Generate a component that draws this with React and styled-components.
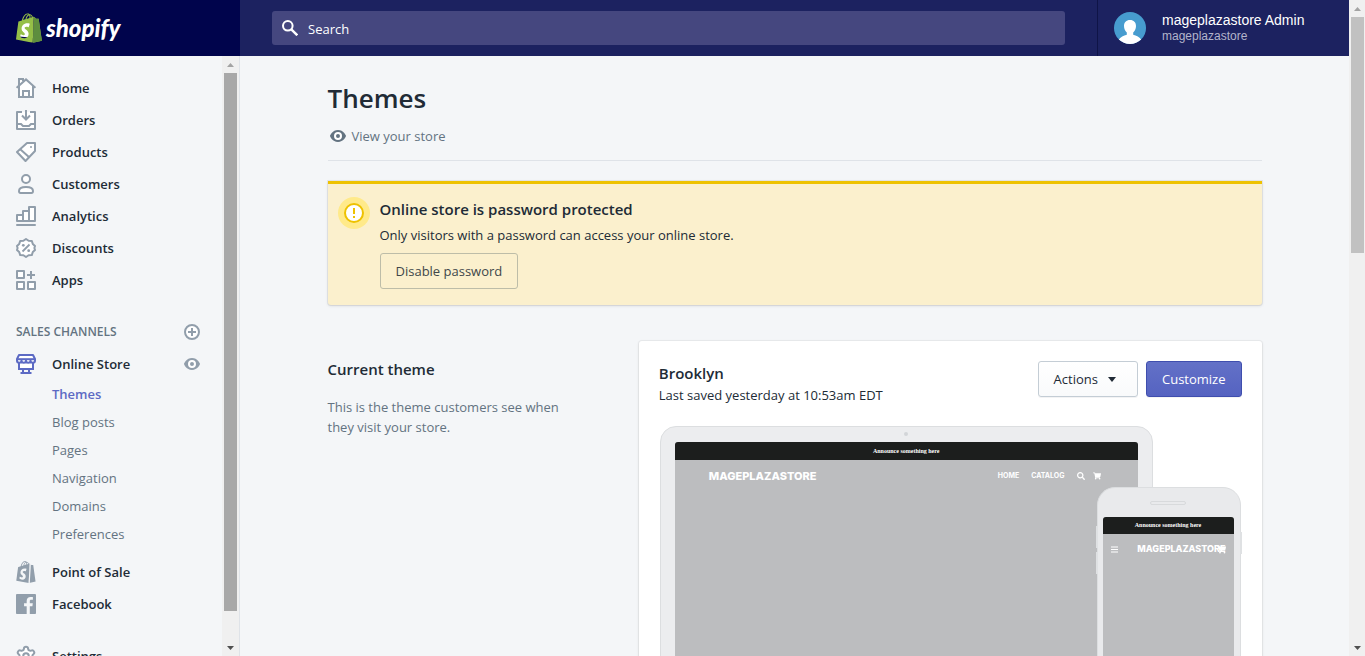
import React from 'react';
import styled, { createGlobalStyle } from 'styled-components';
import { SiShopify } from 'react-icons/si';
import { FaShoppingCart, FaSearch } from 'react-icons/fa';
import { Settings } from 'lucide-react';

const GlobalStyle = createGlobalStyle`
  *, *::before, *::after { box-sizing: border-box; }
  body {
    margin: 0;
    background: #f4f6f8;
    color: #212b36;
    font-family: "Open Sans", "Noto Sans", sans-serif;
    font-size: 13px;
    line-height: 20px;
  }
  h1, h2, h3, p, ul { margin: 0; padding: 0; }
  ul { list-style: none; }
  a { color: inherit; text-decoration: none; }
  button, input { font: inherit; }
  svg { display: block; flex: none; }
`;

const Frame = styled.div`
  display: flex;
  height: 100vh;
  overflow: hidden;
`;
const Page = styled.div`
  flex: 1;
  min-width: 0;
  display: flex;
  flex-direction: column;
`;

/* Scroll bars */
const Track = styled.div`
  flex: none;
  width: ${(p) => p.$width}px;
  padding: 0 2px;
  display: flex;
  flex-direction: column;
  align-items: center;
  background: #f0f0f0;
`;
const Arrow = styled.span`
  flex: none;
  height: 17px;
  display: flex;
  align-items: center;
  justify-content: center;
`;
const Thumb = styled.div`
  width: 13px;
  height: ${(p) => p.$size};
  background: ${(p) => p.$color};
`;
const Fill = styled.div`
  flex: 1;
  min-height: 0;
`;

function ScrollBar({ width, size, color }) {
  return (
    <Track $width={width} aria-hidden="true">
      <Arrow><svg width="7" height="4"><path d="M0 4L3.5 0 7 4z" fill="#a3a3a3" /></svg></Arrow>
      <Fill><Thumb $size={size} $color={color} /></Fill>
      <Arrow><svg width="7" height="4"><path d="M0 0L3.5 4 7 0z" fill="#505050" /></svg></Arrow>
    </Track>
  );
}

/* Top bar */
const TopBar = styled.header`
  flex: none;
  display: flex;
  height: 56px;
  background: #1c2260;
  color: #fff;
`;
const Brand = styled.a`
  flex: none;
  width: 240px;
  padding: 0 16px;
  display: flex;
  align-items: center;
  gap: 4px;
  background: #00044c;
`;
const Wordmark = styled.span`
  font-family: Lato, "Open Sans", sans-serif;
  font-size: 24px;
  line-height: 28px;
  font-weight: 900;
  font-style: italic;
`;
const SearchArea = styled.div`
  flex: 1;
  padding: 0 32px;
  display: flex;
  align-items: center;
`;
const SearchField = styled.label`
  flex: 1;
  height: 34px;
  padding: 0 10px;
  display: flex;
  align-items: center;
  gap: 10px;
  border-radius: 3px;
  background: #45477f;
`;
const SearchInput = styled.input`
  flex: 1;
  min-width: 0;
  padding: 2px 0 0;
  border: 0;
  outline: 0;
  background: none;
  color: #fff;
  &::placeholder { color: #fff; opacity: 1; }
`;
const User = styled.button`
  flex: none;
  width: 252px;
  padding: 0 16px;
  border: 0;
  border-left: 1px solid #0f1447;
  background: none;
  color: #fff;
  display: flex;
  align-items: center;
  gap: 16px;
  text-align: left;
  font-family: "Liberation Sans", Arial, sans-serif;
`;
const UserName = styled.span`
  display: block;
  font-size: 14px;
  line-height: 16px;
`;
const StoreName = styled(UserName)`
  font-size: 12px;
  color: #b3b5cb;
`;

/* Side navigation */
const Body = styled.div`
  flex: 1;
  min-height: 0;
  display: flex;
`;
const Side = styled.aside`
  flex: none;
  width: 240px;
  display: flex;
  overflow: hidden;
  border-right: 1px solid #dfe3e8;
`;
const Nav = styled.nav`
  flex: 1;
  padding: 16px 22px 0 16px;
`;
const Group = styled.ul`
  margin-bottom: ${(p) => p.$gap || 0}px;
`;
const NavRow = styled.li`
  height: 32px;
  display: flex;
  align-items: center;
  color: #919eab;
`;
const NavLink = styled.a`
  flex: 1;
  display: flex;
  align-items: center;
  gap: 16px;
  color: #212b36;
  font-weight: 600;
  svg { color: ${(p) => (p.$active ? '#5c6ac4' : '#919eab')}; }
`;
const SectionHead = styled.div`
  height: 32px;
  display: flex;
  align-items: center;
  justify-content: space-between;
`;
const SectionTitle = styled.h2`
  font-size: 12px;
  line-height: 16px;
  font-weight: 600;
  color: #637381;
`;
const IconButton = styled.button`
  width: 16px;
  padding: 0;
  border: 0;
  background: none;
  color: #919eab;
  display: flex;
  justify-content: center;
`;
const SubLink = styled.a`
  display: block;
  padding: 4px 0 4px 36px;
  color: ${(p) => (p.$active ? '#5c6ac4' : '#637381')};
  font-weight: ${(p) => (p.$active ? 600 : 400)};
`;

/* Main content */
const Main = styled.main`
  flex: 1;
  min-width: 0;
  overflow: hidden;
`;
const Content = styled.div`
  max-width: 998px;
  margin: 0 auto;
  padding: 24px 32px 0;
`;
const PageHead = styled.div`
  padding-bottom: 14px;
  border-bottom: 1px solid #dfe3e8;
`;
const Title = styled.h1`
  font-size: 26px;
  line-height: 36px;
  font-weight: 600;
`;
const ViewLink = styled.a`
  margin-top: 10px;
  display: flex;
  align-items: center;
  gap: 4px;
  color: #637381;
`;
const Banner = styled.section`
  margin-top: 20px;
  padding: 13px 16px 16px 10px;
  display: flex;
  gap: 10px;
  border-top: 3px solid #eec200;
  border-radius: 0 0 3px 3px;
  background: #fbf0cd;
  box-shadow: 0 0 0 1px rgba(63, 63, 68, 0.08), 0 1px 3px rgba(63, 63, 68, 0.15);
`;
const Heading = styled.h2`
  font-size: 15px;
  line-height: 24px;
  font-weight: 600;
`;
const Button = styled.button`
  height: 36px;
  padding: 0 15px;
  display: flex;
  align-items: center;
  gap: 4px;
  border: 1px solid ${(p) => (p.$kind === 'primary' ? '#3f4eae' : p.$kind === 'outline' ? '#bdbda8' : '#c4cdd5')};
  border-radius: 3px;
  color: ${(p) => (p.$kind === 'primary' ? '#fff' : p.$kind === 'outline' ? '#40474a' : '#212b36')};
  background: ${(p) => (p.$kind === 'primary' ? 'linear-gradient(#6371c7, #5563c1)' : p.$kind === 'outline' ? 'none' : 'linear-gradient(#fff, #f9fafb)')};
  box-shadow: ${(p) => (p.$kind === 'outline' ? 'none' : '0 1px 0 rgba(22, 29, 37, 0.05)')};
  white-space: nowrap;
`;
const BannerText = styled.div`
  > p { margin: 4px 0 8px; }
`;
const Columns = styled.div`
  margin-top: 36px;
  display: grid;
  grid-template-columns: 1fr 2fr;
`;
const Annotation = styled.div`
  padding: 16px 20px 0 0;
  > p { margin-top: 16px; padding-right: 40px; color: #637381; }
`;
const Card = styled.section`
  padding: 20px;
  border-radius: 3px;
  background: #fff;
  box-shadow: 0 0 0 1px rgba(63, 63, 68, 0.05), 0 1px 3px rgba(63, 63, 68, 0.15);
`;
const CardHead = styled.div`
  display: flex;
  justify-content: space-between;
`;
const Buttons = styled.div`
  display: flex;
  gap: 8px;
`;

/* Theme preview */
const Preview = styled.div`
  position: relative;
  margin-top: 21px;
  padding: 0 89px 0 1px;
`;
const Laptop = styled.div`
  height: 360px;
  padding: 0 14px;
  border: 1px solid #dcdee0;
  border-radius: 16px 16px 0 0;
  background: #ecedef;
`;
const Camera = styled.div`
  height: 15px;
  display: flex;
  justify-content: center;
  align-items: center;
  &::after {
    content: "";
    width: 4px;
    height: 4px;
    margin-bottom: 2px;
    border-radius: 50%;
    background: #d3d5d8;
  }
`;
const Screen = styled.div`
  height: 340px;
  border-radius: 3px 3px 0 0;
  overflow: hidden;
  background: #bcbdbf;
  color: #fff;
`;
const Announcement = styled.div`
  background: #1c1e1d;
  text-align: center;
  font-family: "Liberation Serif", serif;
  font-size: 6px;
  line-height: ${(p) => p.$height}px;
  font-weight: 700;
`;
const ShopBar = styled.div`
  padding: ${(p) => (p.$small ? '9px 8px 0' : '8px 37px 0 34px')};
  display: flex;
  align-items: center;
  justify-content: space-between;
`;
const ShopName = styled.span`
  font-family: Inter, sans-serif;
  font-size: ${(p) => (p.$small ? 9 : 11)}px;
  line-height: ${(p) => (p.$small ? 12 : 16)}px;
  font-weight: 800;
`;
const ShopNav = styled.span`
  display: flex;
  align-items: center;
  gap: 12px;
  font-family: Inter, sans-serif;
  font-size: 7px;
  line-height: 12px;
  font-weight: 700;
`;
const ShopIcons = styled.span`
  display: flex;
  gap: 8px;
`;
const Phone = styled.div`
  position: absolute;
  top: 61px;
  right: 1px;
  width: 144px;
  height: 300px;
  padding: 0 6px 0 5px;
  border: 1px solid #dcdee0;
  border-radius: 18px 18px 0 0;
  background: #e9eaec;
`;
const SideKey = styled.span`
  position: absolute;
  top: ${(p) => p.$top}px;
  ${(p) => p.$side}: -2px;
  width: 2px;
  height: 22px;
  background: #dfe1e3;
`;
const Speaker = styled.div`
  height: 29px;
  display: flex;
  justify-content: center;
  align-items: center;
  &::after {
    content: "";
    width: 36px;
    height: 4px;
    border: 1px solid #d8dadc;
    border-radius: 2px;
  }
`;
const CartOverName = styled.span`
  position: absolute;
  right: 14px;
`;

const Icon = ({ children, size = 20, box = '0 0 20 20' }) => (
  <svg width={size} height={size} viewBox={box} fill="none" stroke="currentColor" strokeWidth="2" aria-hidden="true">
    {children}
  </svg>
);

const icons = {
  home: (
    <Icon>
      <path d="M3 9V1h4v3l3-3 7 7v11H3z" fill="#fff" stroke="none" />
      <path d="M3 8v11h14V8" />
      <path d="M3 8V1h4v2" />
      <path d="M.6 9.800L10 1.400l9.400 8.400" />
      <path d="M7 19v-6h6v6" />
    </Icon>
  ),
  orders: (
    <Icon>
      <path d="M6 2H1v17h18V2h-5" fill="#fff" strokeLinejoin="round" />
      <path d="M1 14h4l2 2h6l2-2h4" />
      <path d="M10 0v9M6 5.500L10 9.500l4-4" />
    </Icon>
  ),
  products: (
    <Icon>
      <path d="M11 1h8v8L9.500 19 1 10z" fill="#fff" strokeLinejoin="round" />
      <path d="M4.500 7.500l9 8" />
      <circle cx="15" cy="5" r="1" fill="currentColor" stroke="none" />
    </Icon>
  ),
  customers: (
    <Icon>
      <circle cx="10" cy="5" r="4" fill="#fff" />
      <path d="M3 17c0-2.600 3-4 7-4s7 1.400 7 4c0 1.200-.6 2-1.600 2H4.600C3.600 19 3 18.200 3 17z" fill="#fff" />
    </Icon>
  ),
  analytics: (
    <Icon>
      <path d="M1 15V9h6v6zM7 15V5h6v10zM13 15V1h6v14z" fill="#fff" strokeLinejoin="round" />
      <path d="M1 19h18" strokeLinecap="round" />
    </Icon>
  ),
  discounts: (
    <Icon>
      <path
        d="M10 1l2.600 1.800 3.200.1 1 3.100L19 8l-.6 2 .6 2-2.200 2-1 3.100-3.200.1L10 19l-2.600-1.800-3.200-.1-1-3.100L1 12l.6-2L1 8l2.200-2 1-3.100 3.200-.1z"
        fill="#fff"
        strokeLinejoin="round"
      />
      <path d="M13.500 6.500l-7 7" strokeWidth="1.800" />
      <circle cx="7.300" cy="7.300" r="1.400" fill="currentColor" stroke="none" />
      <circle cx="12.700" cy="12.700" r="1.400" fill="currentColor" stroke="none" />
    </Icon>
  ),
  apps: (
    <Icon>
      <path d="M1 1h7v7H1zM1 12h7v7H1zM12 12h7v7h-7z" fill="#fff" strokeLinejoin="round" />
      <path d="M15 1v8M11 5h8" />
    </Icon>
  ),
  store: (
    <Icon>
      <path d="M3 8h14v7H3z" fill="#fff" />
      <path d="M3 1h14l2 4v1.500a2.200 2.200 0 0 1-4.500 0 2.200 2.200 0 0 1-4.500 0 2.200 2.200 0 0 1-4.500 0A2.200 2.200 0 0 1 1 6.500V5z" fill="#fff" strokeLinejoin="round" />
      <path d="M1 5.200h18" />
      <path d="M7 15v4M13 15v4M4.500 19h11" />
    </Icon>
  ),
  pos: (
    <Icon size={22} box="1 0 22 24">
      <SiShopify size={24} stroke="none" />
      <path d="M15.500 24l1.200-21" stroke="#f4f6f8" strokeWidth="1.300" />
    </Icon>
  ),
  facebook: (
    <Icon>
      <path
        d="M18.896 0H1.104C.494 0 0 .494 0 1.104v17.792C0 19.506.494 20 1.104 20h9.578v-7.745H8.076V9.237h2.606V7.010c0-2.584 1.578-3.990 3.883-3.990 1.104 0 2.052.082 2.329.119v2.700h-1.598c-1.254 0-1.496.595-1.496 1.470v1.927h2.989l-.39 3.018h-2.600V20h5.097c.61 0 1.104-.494 1.104-1.104V1.104C20 .494 19.506 0 18.896 0z"
        fill="currentColor"
        stroke="none"
      />
    </Icon>
  ),
  settings: <Settings size={22} strokeWidth={2.2} fill="#fff" />,
};

const Slot = styled.span`
  flex: none;
  width: 20px;
  display: flex;
  justify-content: center;
`;

const Eye = () => (
  <Icon>
    <circle cx="10" cy="10" r="4" fill="#fff" stroke="none" />
    <path
      fill="currentColor"
      stroke="none"
      d="M17.928 9.628C17.837 9.399 15.611 4 10 4S2.162 9.399 2.071 9.628a1.017 1.017 0 000 .744C2.163 10.601 4.389 16 10 16s7.837-5.399 7.928-5.628a1.017 1.017 0 000-.744zM10 14a4 4 0 110-8 4 4 0 010 8zm0-6a2 2 0 10.002 4.001A2 2 0 009.999 8z"
    />
  </Icon>
);

const Caret = () => (
  <Icon>
    <path d="M6 8h8l-4 5z" fill="currentColor" stroke="none" />
  </Icon>
);

const BagLogo = () => (
  <svg width="26" height="30" viewBox="1.400 0 21.200 24" aria-hidden="true">
    <path d="M5 8l10-1v13l-11-1z" fill="#fff" />
    <SiShopify size={24} color="#95bf47" />
    <path
      fill="#5e8e3e"
      d="M15.337 23.979l7.216-1.561s-2.604-17.613-2.625-17.730c-.018-.116-.114-.192-.211-.192s-1.929-.136-1.929-.136-1.275-1.274-1.439-1.411c-.045-.037-.075-.057-.121-.074l-.914 21.104z"
    />
  </svg>
);

const Avatar = () => (
  <svg width="32" height="32" viewBox="0 0 32 32" aria-hidden="true">
    <clipPath id="round"><circle cx="16" cy="16" r="16" /></clipPath>
    <g clipPath="url(#round)">
      <rect width="32" height="32" fill="#479ccf" />
      <path
        fill="#fff"
        d="M16 8c3.800 0 6 2.400 6 6 0 2.800-1.200 5-2.800 6.400v2.300c3.200 1 6.300 2 8.300 5.300V32h-23v-4c2-3.300 5.100-4.300 8.300-5.300v-2.300C11.200 19 10 16.800 10 14c0-3.600 2.200-6 6-6z"
      />
    </g>
  </svg>
);

const mainLinks = [
  ['home', 'Home'],
  ['orders', 'Orders'],
  ['products', 'Products'],
  ['customers', 'Customers'],
  ['analytics', 'Analytics'],
  ['discounts', 'Discounts'],
  ['apps', 'Apps'],
];
const storeLinks = ['Themes', 'Blog posts', 'Pages', 'Navigation', 'Domains', 'Preferences'];

const NavItem = ({ icon, label, active, children }) => (
  <NavRow>
    <NavLink href="#" $active={active}>
      <Slot>{icons[icon]}</Slot>
      {label}
    </NavLink>
    {children}
  </NavRow>
);

export default function App() {
  return (
    <Frame>
      <GlobalStyle />
      <Page>
        <TopBar>
          <Brand href="#">
            <BagLogo />
            <Wordmark>shopify</Wordmark>
          </Brand>
          <SearchArea>
            <SearchField>
              <Icon size={16} box="0 0 16 16">
                <circle cx="5.800" cy="5.800" r="4.800" />
                <path d="M9.300 9.300l6 6" strokeWidth="2.400" />
              </Icon>
              <SearchInput type="search" placeholder="Search" aria-label="Search" />
            </SearchField>
          </SearchArea>
          <User type="button">
            <Avatar />
            <span>
              <UserName>mageplazastore Admin</UserName>
              <StoreName>mageplazastore</StoreName>
            </span>
          </User>
        </TopBar>
        <Body>
          <Side>
            <Nav>
              <Group $gap={20}>
                {mainLinks.map(([icon, label]) => <NavItem key={icon} icon={icon} label={label} />)}
              </Group>
              <SectionHead>
                <SectionTitle>SALES CHANNELS</SectionTitle>
                <IconButton type="button" aria-label="Add sales channel">
                  <Icon size={16} box="0 0 16 16">
                    <circle cx="8" cy="8" r="7" fill="#fff" />
                    <path d="M8 4v8M4 8h8" />
                  </Icon>
                </IconButton>
              </SectionHead>
              <Group $gap={8}>
                <NavItem icon="store" label="Online Store" active>
                  <IconButton type="button" aria-label="View your online store"><Eye /></IconButton>
                </NavItem>
                {storeLinks.map((label, i) => (
                  <li key={label}><SubLink href="#" $active={i === 0}>{label}</SubLink></li>
                ))}
              </Group>
              <Group $gap={20}>
                <NavItem icon="pos" label="Point of Sale" />
                <NavItem icon="facebook" label="Facebook" />
              </Group>
              <Group>
                <NavItem icon="settings" label="Settings" />
              </Group>
            </Nav>
            <ScrollBar width={17} size="95%" color="#a8a8a8" />
          </Side>
          <Main>
            <Content>
              <PageHead>
                <Title>Themes</Title>
                <ViewLink href="#"><Eye />View your store</ViewLink>
              </PageHead>
              <Banner>
                <svg width="32" height="32" viewBox="0 0 32 32" aria-hidden="true">
                  <circle cx="16" cy="16" r="16" fill="#ffea8a" />
                  <circle cx="16" cy="16" r="9" fill="#fff" stroke="#eec200" strokeWidth="2" />
                  <path d="M16 11v6M16 19v2" stroke="#eec200" strokeWidth="2" />
                </svg>
                <BannerText>
                  <Heading>Online store is password protected</Heading>
                  <p>Only visitors with a password can access your online store.</p>
                  <Button type="button" $kind="outline">Disable password</Button>
                </BannerText>
              </Banner>
              <Columns>
                <Annotation>
                  <Heading>Current theme</Heading>
                  <p>This is the theme customers see when they visit your store.</p>
                </Annotation>
                <Card>
                  <CardHead>
                    <div>
                      <Heading>Brooklyn</Heading>
                      <p>Last saved yesterday at 10:53am EDT</p>
                    </div>
                    <Buttons>
                      <Button type="button">Actions<Caret /></Button>
                      <Button type="button" $kind="primary">Customize</Button>
                    </Buttons>
                  </CardHead>
                  <Preview>
                    <Laptop>
                      <Camera />
                      <Screen>
                        <Announcement $height={18}>Announce something here</Announcement>
                        <ShopBar>
                          <ShopName>MAGEPLAZASTORE</ShopName>
                          <ShopNav>
                            <span>HOME</span>
                            <span>CATALOG</span>
                            <ShopIcons>
                              <FaSearch size={8} />
                              <FaShoppingCart size={8} />
                            </ShopIcons>
                          </ShopNav>
                        </ShopBar>
                      </Screen>
                    </Laptop>
                    <Phone>
                      <SideKey $side="left" $top={38} />
                      <SideKey $side="left" $top={64} />
                      <SideKey $side="right" $top={44} />
                      <Speaker />
                      <Screen>
                        <Announcement $height={17}>Announce something here</Announcement>
                        <ShopBar $small>
                          <svg width="7" height="7" aria-hidden="true"><path d="M0 1h7M0 3.500h7M0 6h7" stroke="#fff" /></svg>
                          <ShopName $small>MAGEPLAZASTORE</ShopName>
                          <CartOverName><FaShoppingCart size={9} /></CartOverName>
                        </ShopBar>
                      </Screen>
                    </Phone>
                  </Preview>
                </Card>
              </Columns>
            </Content>
          </Main>
        </Body>
      </Page>
      <ScrollBar width={16} size="38%" color="#c1c1c1" />
    </Frame>
  );
}
